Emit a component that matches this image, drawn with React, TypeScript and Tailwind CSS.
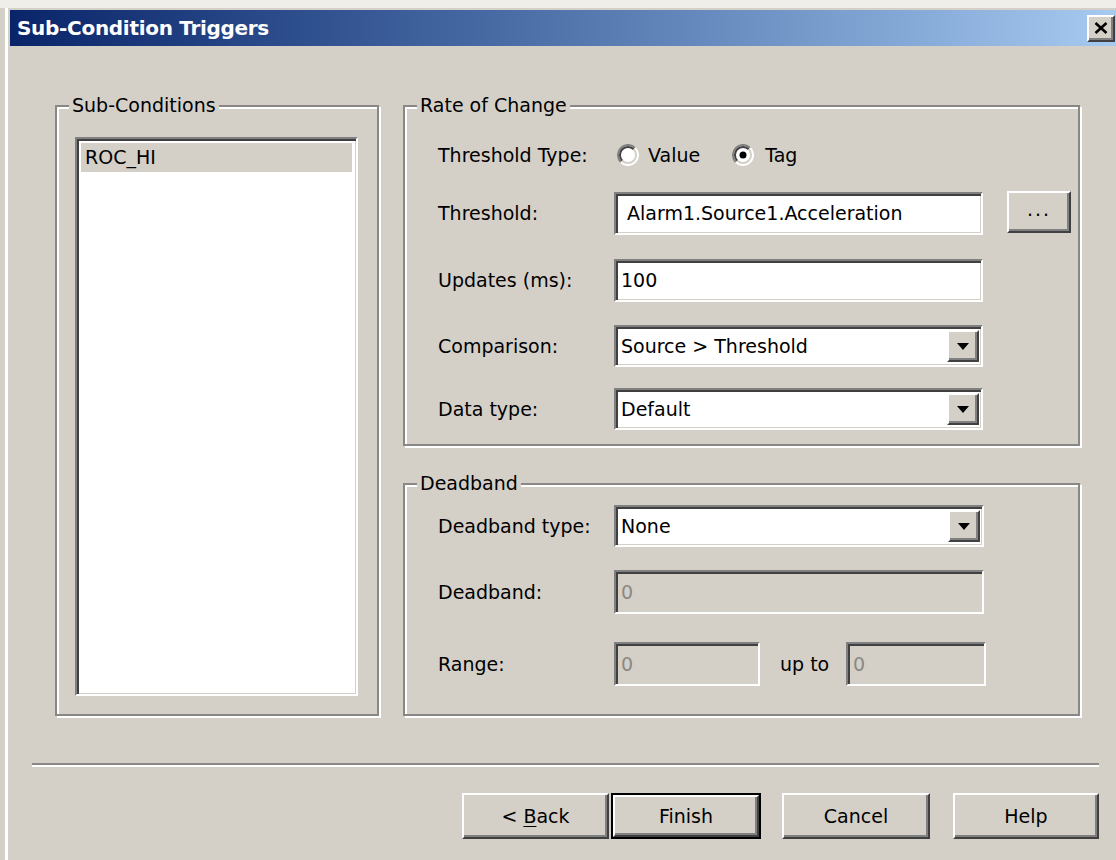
import React from "react"

const face = "bg-[#d4d0c8]"
const raised =
  "border-2 border-t-white border-l-white border-b-[#404040] border-r-[#404040] shadow-[inset_-2px_-2px_0_#808080] bg-[#d4d0c8]"
const sunken =
  "border-2 border-t-[#808080] border-l-[#808080] border-b-white border-r-white shadow-[inset_2px_2px_0_#404040,inset_-1px_-1px_0_#d4d0c8]"

function GroupBox(props: { label: string; className?: string; children?: React.ReactNode }) {
  return (
    <div
      className={
        "relative border-2 border-[#8a8884] shadow-[inset_2px_2px_0_#fff,2px_2px_0_#fff] " +
        (props.className ?? "")
      }
    >
      <span className={"absolute -top-[13px] left-[12px] px-[3px] leading-[22px] " + face}>
        {props.label}
      </span>
      {props.children}
    </div>
  )
}

function TextBox(props: { value: string; className?: string; disabled?: boolean; indent?: string }) {
  return (
    <div
      className={
        sunken +
        " flex items-center " +
        (props.disabled ? "bg-[#d4d0c8] text-[#8a8884] " : "bg-white ") +
        (props.className ?? "")
      }
    >
      <span className={props.indent ?? "pl-[5px]"}>{props.value}</span>
    </div>
  )
}

function Combo(props: { value: string; className?: string }) {
  return (
    <div className={sunken + " flex items-center bg-white pl-[5px] pr-[2px] " + (props.className ?? "")}>
      <span className="flex-1">{props.value}</span>
      <div className={raised + " flex h-[32px] w-[32px] items-center justify-center"}>
        <svg width="12" height="7" viewBox="0 0 12 7">
          <path d="M0 0h12L6 7z" fill="#000" />
        </svg>
      </div>
    </div>
  )
}

function Radio(props: { checked?: boolean }) {
  return (
    <svg width="22" height="22" viewBox="0 0 22 22">
      <circle cx="11" cy="11" r="10" fill="#fff" />
      <path d="M3.9 18.1A10 10 0 0 1 18.1 3.9" stroke="#808080" strokeWidth="2" fill="none" />
      <path d="M5.3 16.7A8 8 0 0 1 16.7 5.3" stroke="#404040" strokeWidth="2" fill="none" />
      <path d="M18.1 3.9A10 10 0 0 1 3.9 18.1" stroke="#fff" strokeWidth="2" fill="none" />
      <path d="M16.7 5.3A8 8 0 0 1 5.3 16.7" stroke="#d4d0c8" strokeWidth="2" fill="none" />
      {props.checked && <circle cx="11" cy="11" r="3.5" fill="#000" />}
    </svg>
  )
}

function PushButton(props: { children: React.ReactNode; className?: string; isDefault?: boolean }) {
  const inner = (
    <div className={raised + " flex h-full w-full items-center justify-center"}>{props.children}</div>
  )
  if (props.isDefault) {
    return <div className={"border-2 border-black " + (props.className ?? "")}>{inner}</div>
  }
  return <div className={props.className}>{inner}</div>
}

export default function App() {
  return (
    <div
      className={"h-[860px] w-[1116px] overflow-hidden text-[19px] text-black " + face}
      style={{ fontFamily: '"DejaVu Sans", Tahoma, sans-serif' }}
    >
      <div className="h-[8px] bg-[#efeee9]" />
      <div className="flex h-[852px]">
        <div className="w-[5px]" />
        <div className="w-[3px] bg-white" />
        <div className="flex flex-1 flex-col pl-[2px] pt-[2px]">
          {/* caption */}
          <div className="flex h-[36px] items-center bg-gradient-to-r from-[#0a246a] to-[#a6caf0] pl-[7px] pr-[1px]">
            <span className="flex-1 text-[20px] font-bold tracking-[-0.3px] text-white">
              Sub-Condition Triggers
            </span>
            <div className={raised + " flex h-[27px] w-[28px] items-center justify-center"}>
              <svg width="14" height="12" viewBox="0 0 14 12">
                <path d="M1.5 1l11 10M12.5 1l-11 10" stroke="#000" strokeWidth="2.6" />
              </svg>
            </div>
          </div>

          {/* body */}
          <div className="flex pl-[45px] pt-[59px]">
            <GroupBox label="Sub-Conditions" className="h-[611px] w-[324px]">
              <div className={sunken + " ml-[18px] mt-[30px] h-[559px] w-[283px] bg-white p-[4px]"}>
                <div className="flex h-[29px] items-center bg-[#d4d0c8] pl-[4px]">ROC_HI</div>
              </div>
            </GroupBox>

            <div className="ml-[24px] flex w-[677px] flex-col">
              <GroupBox label="Rate of Change" className="h-[341px] pl-[33px] pt-[33px]">
                <div className="flex h-[30px] items-center">
                  <span className="w-[176px]">Threshold Type:</span>
                  <span className="ml-[3px]"><Radio /></span>
                  <span className="ml-[9px]">Value</span>
                  <span className="ml-[32px]"><Radio checked /></span>
                  <span className="ml-[11px]">Tag</span>
                </div>
                <div className="mt-[22px] flex h-[43px] items-center">
                  <span className="w-[176px]">Threshold:</span>
                  <TextBox value="Alarm1.Source1.Acceleration" indent="pl-[11px]" className="h-[43px] w-[369px]" />
                  <PushButton className="mb-[4px] ml-[24px] h-[42px] w-[64px]">
                    <span className="pb-[4px] tracking-[2px]">...</span>
                  </PushButton>
                </div>
                <div className="mt-[24px] flex h-[43px] items-center">
                  <span className="w-[176px]">Updates (ms):</span>
                  <TextBox value="100" className="h-[43px] w-[369px]" />
                </div>
                <div className="mt-[23px] flex h-[42px] items-center">
                  <span className="w-[176px]">Comparison:</span>
                  <Combo value="Source > Threshold" className="h-[42px] w-[369px]" />
                </div>
                <div className="mt-[21px] flex h-[42px] items-center">
                  <span className="w-[176px]">Data type:</span>
                  <Combo value="Default" className="h-[42px] w-[369px]" />
                </div>
              </GroupBox>

              <GroupBox label="Deadband" className="mt-[37px] h-[233px] pl-[33px] pt-[20px]">
                <div className="flex h-[42px] items-center">
                  <span className="w-[176px]">Deadband type:</span>
                  <Combo value="None" className="h-[42px] w-[370px]" />
                </div>
                <div className="mt-[23px] flex h-[44px] items-center">
                  <span className="w-[176px]">Deadband:</span>
                  <TextBox value="0" disabled className="h-[44px] w-[370px]" />
                </div>
                <div className="mt-[28px] flex h-[44px] items-center">
                  <span className="w-[176px]">Range:</span>
                  <TextBox value="0" disabled className="h-[44px] w-[146px]" />
                  <span className="ml-[20px] w-[66px]">up to</span>
                  <TextBox value="0" disabled className="h-[44px] w-[140px]" />
                </div>
              </GroupBox>
            </div>
          </div>

          {/* etched divider */}
          <div className="ml-[22px] mt-[47px] h-[4px] w-[1067px] border-t-2 border-b-2 border-t-[#8a8884] border-b-white" />

          <div className="mt-[26px] flex h-[46px] pl-[452px]">
            <PushButton className="h-[46px] w-[147px]">
              <span>
                &lt; <span className="underline underline-offset-[3px]">B</span>ack
              </span>
            </PushButton>
            <PushButton isDefault className="ml-[2px] h-[46px] w-[150px]">
              Finish
            </PushButton>
            <PushButton className="ml-[21px] h-[46px] w-[148px]">Cancel</PushButton>
            <PushButton className="ml-[23px] h-[46px] w-[146px]">Help</PushButton>
          </div>
        </div>
      </div>
    </div>
  )
}
